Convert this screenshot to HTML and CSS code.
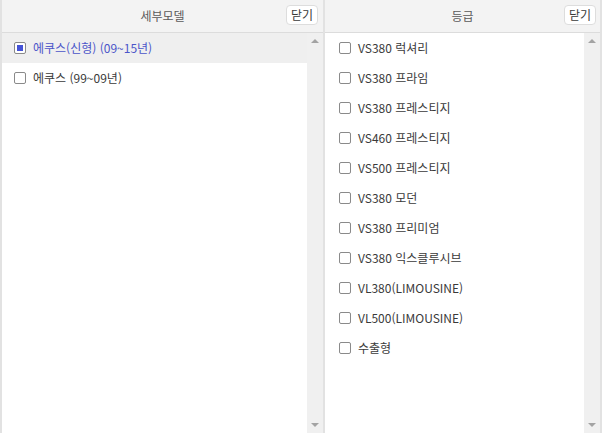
FILE: index.html
```html
<!DOCTYPE html>
<html lang="ko">
<head>
<meta charset="utf-8">
<link rel="stylesheet" href="styles.css">
</head>
<body>
<div class="wrap">
  <section class="panel panel-left">
    <header class="head">
      <span class="title">세부모델</span>
      <button class="close">닫기</button>
    </header>
    <div class="body">
      <ul class="list">
        <li class="item selected"><span class="cb"></span><span class="label">에쿠스(신형) (09~15년)</span></li>
        <li class="item"><span class="cb"></span><span class="label">에쿠스 (99~09년)</span></li>
      </ul>
      <div class="track"><span class="arrow up"></span><span class="arrow down"></span></div>
    </div>
  </section>
  <section class="panel panel-right">
    <header class="head">
      <span class="title">등급</span>
      <button class="close">닫기</button>
    </header>
    <div class="body">
      <ul class="list">
        <li class="item"><span class="cb"></span><span class="label">VS380 럭셔리</span></li>
        <li class="item"><span class="cb"></span><span class="label">VS380 프라임</span></li>
        <li class="item"><span class="cb"></span><span class="label">VS380 프레스티지</span></li>
        <li class="item"><span class="cb"></span><span class="label">VS460 프레스티지</span></li>
        <li class="item"><span class="cb"></span><span class="label">VS500 프레스티지</span></li>
        <li class="item"><span class="cb"></span><span class="label">VS380 모던</span></li>
        <li class="item"><span class="cb"></span><span class="label">VS380 프리미엄</span></li>
        <li class="item"><span class="cb"></span><span class="label">VS380 익스클루시브</span></li>
        <li class="item"><span class="cb"></span><span class="label">VL380(LIMOUSINE)</span></li>
        <li class="item"><span class="cb"></span><span class="label">VL500(LIMOUSINE)</span></li>
        <li class="item"><span class="cb"></span><span class="label">수출형</span></li>
      </ul>
      <div class="track"><span class="arrow up"></span><span class="arrow down"></span></div>
    </div>
  </section>
</div>
</body>
</html>
```
FILE: styles.css
```css
* { box-sizing: border-box; }
html, body { margin: 0; padding: 0; background: #fff; }
body {
  font-family: "Noto Sans CJK KR", "Noto Sans", sans-serif;
  font-size: 12px;
  color: #3a3a3a;
}
.wrap {
  display: flex;
  width: 602px;
  height: 433px;
  overflow: hidden;
}
.panel {
  display: flex;
  flex-direction: column;
  height: 433px;
}
.panel-left {
  width: 325px;
  border-left: 2px solid #e2e2e2;
  border-right: 2px solid #e2e2e2;
}
.panel-right {
  width: 277px;
  border-right: 2px solid #e2e2e2;
}
.head {
  position: relative;
  height: 33px;
  flex: none;
  background: #f3f3f3;
  border-bottom: 1px solid #dcdcdc;
  display: flex;
  align-items: center;
  justify-content: center;
}
.title {
  color: #5a5a5a;
  font-size: 12px;
  line-height: 16px;
}
.close {
  position: absolute;
  top: 5px;
  height: 20px;
  padding: 0 4px;
  border: 1px solid #dddddd;
  border-radius: 4px;
  background: #fff;
  font-family: inherit;
  font-size: 12px;
  line-height: 16px;
  color: #3a3a3a;
}
.panel-left .close { right: 5px; }
.panel-right .close { right: 4px; }
.body {
  flex: 1;
  display: flex;
  min-height: 0;
}
.list {
  list-style: none;
  margin: 0;
  padding: 0;
  flex: 1;
}
.item {
  height: 30px;
  display: flex;
  align-items: center;
  padding-left: 12px;
  color: #3a3a3a;
}
.panel-right .item { padding-left: 14px; }
.item.selected {
  background: #efefef;
  color: #4b55c9;
}
.cb {
  width: 12px;
  height: 12px;
  border: 1px solid #8a8a8a;
  border-radius: 2px;
  background: #fff;
  margin-right: 7px;
  flex: none;
  display: flex;
  align-items: center;
  justify-content: center;
}
.selected .cb::after {
  content: "";
  width: 6px;
  height: 6px;
  background: #4452d6;
}
.label {
  line-height: 16px;
  margin-top: -1px;
}
.track {
  position: relative;
  width: 16px;
  flex: none;
  background: #f0f0f0;
}
.arrow {
  position: absolute;
  left: 4px;
  width: 0;
  height: 0;
  border-left: 4px solid transparent;
  border-right: 4px solid transparent;
}
.arrow.up {
  top: 6px;
  border-bottom: 4px solid #a3a3a3;
}
.arrow.down {
  bottom: 6px;
  border-top: 4px solid #a3a3a3;
}
```
